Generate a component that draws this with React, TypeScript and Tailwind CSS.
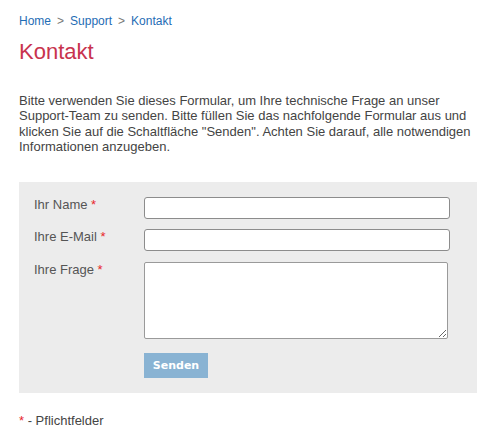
import React from 'react';

const font = { fontFamily: '"Liberation Sans", Arial, sans-serif' };

function Req() {
  return <span className="text-[#e8262b]">*</span>;
}

function Row({ label, children }: { label: string; children: React.ReactNode }) {
  return (
    <div className="flex items-start">
      <label className="w-[110px] shrink-0 text-[13px] leading-[16px] text-[#555]">
        {label} <Req />
      </label>
      {children}
    </div>
  );
}

export default function App() {
  return (
    <div className="min-h-[436px] w-[482px] bg-white px-[19px] pt-[13px]" style={font}>
      <nav className="flex items-center text-[12px] leading-[16px]">
        <a className="text-[#1f6db5]">Home</a>
        <span className="mx-[6px] text-[#777]">&gt;</span>
        <a className="text-[#1f6db5]">Support</a>
        <span className="mx-[6px] text-[#777]">&gt;</span>
        <a className="text-[#1f6db5]">Kontakt</a>
      </nav>

      <h1 className="mt-[10px] text-[22px] leading-[26px] text-[#c8334e]">Kontakt</h1>

      <p className="mt-[28px] -mr-[14px] text-[13px] leading-[15.4px] text-[#444]">
        Bitte verwenden Sie dieses Formular, um Ihre technische Frage an unser Support-Team zu senden. Bitte füllen Sie das nachfolgende Formular aus und klicken Sie auf die Schaltfläche "Senden". Achten Sie darauf, alle notwendigen Informationen anzugeben.
      </p>

      <form className="mt-[27px] -mr-[14px] flex flex-col bg-[#ececec] pb-[15px] pl-[15px] pt-[15px]">
        <Row label="Ihr Name">
          <input className="h-[22px] w-[306px] rounded-[3px] border border-[#8c8c8c] bg-white" />
        </Row>
        <div className="mt-[10px]">
          <Row label="Ihre E-Mail">
            <input className="h-[22px] w-[306px] rounded-[3px] border border-[#8c8c8c] bg-white" />
          </Row>
        </div>
        <div className="mt-[11px]">
          <Row label="Ihre Frage">
            <textarea className="h-[77px] w-[304px] rounded-[2px] border border-[#9a9a9a] bg-white" />
          </Row>
        </div>
        <div className="mt-[13px] pl-[110px]">
          <button
            type="button"
            className="h-[25px] w-[64px] bg-[#89b3d3] text-[11px] font-bold text-white"
            style={{ fontFamily: '"DejaVu Sans", Verdana, sans-serif' }}
          >
            Senden
          </button>
        </div>
      </form>

      <p className="mt-[20px] text-[13px] leading-[16px] text-[#444]">
        <Req /> - Pflichtfelder
      </p>
    </div>
  );
}
